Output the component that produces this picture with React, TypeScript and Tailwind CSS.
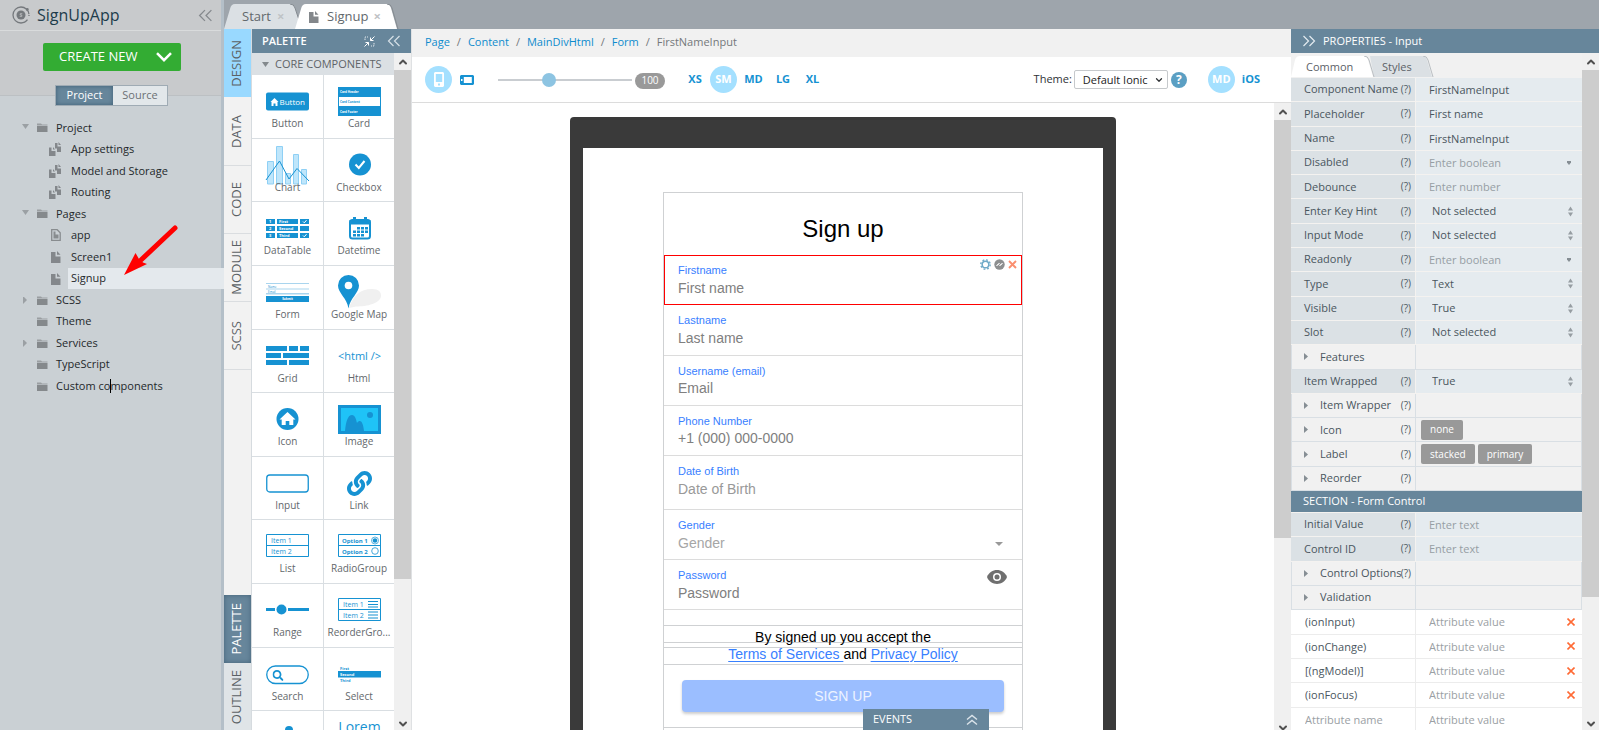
import React from 'react';
import { ChevronDown, ChevronUp } from 'lucide-react';
import { FaLink, FaSearch } from 'react-icons/fa';

const BLUE = '#1692d2';

/* ---------- shared pieces ---------- */

function ScrollBar({ thumb, end = 'h-[12px]' }: { thumb: string; end?: string }) {
  return (
    <div className="flex w-[17px] shrink-0 flex-col overflow-hidden bg-[#f0f0f0]" aria-hidden="true">
      <div className="flex h-[17px] shrink-0 items-center justify-center text-[#505050]">
        <ChevronUp size={12} strokeWidth={4} />
      </div>
      <div className={`min-h-0 bg-[#cdcdcd] ${thumb}`} />
      <div className="min-h-[17px] flex-1" />
      <div className={`flex shrink-0 items-center justify-center text-[#505050] ${end}`}>
        <ChevronDown size={12} strokeWidth={4} className="shrink-0" />
      </div>
    </div>
  );
}

function DoubleChevron({ right = false, size = 14 }: { right?: boolean; size?: number }) {
  return (
    <svg width={size} height={size} viewBox="0 0 14 14" fill="none" stroke="currentColor" strokeWidth="1.2">
      {right ? <path d="M1.5 2 6.5 7l-5 5M7.5 2l5 5-5 5" /> : <path d="M6.5 2l-5 5 5 5M12.5 2l-5 5 5 5" />}
    </svg>
  );
}

function PageIcon({ outlined = false }: { outlined?: boolean }) {
  return outlined ? (
    <svg width="10" height="12" viewBox="0 0 10 12">
      <path d="M.7.7h5.5l3 3v7.6H.7z" fill="none" stroke="#888c8f" strokeWidth="1.3" />
      <path d="M2.5 2.5h2v3h3V9.500h-5z" fill="#888c8f" />
    </svg>
  ) : (
    <svg width="10" height="12" viewBox="0 0 10 12">
      <path d="M0 1h4.500v4.500H9.500V12H0z" fill="#83878b" />
      <path d="M6 0l3.500 3.800H6z" fill="#83878b" />
    </svg>
  );
}

function PagesIcon() {
  return (
    <svg width="13" height="14" viewBox="0 0 13 14" fill="#83878b">
      <path d="M0 5.500h2.500v3.500h4V14H0z" />
      <path d="M4 5l2 2.500H4zM6 1h2.500v3.500H12V10H8V6.500H6z" />
      <path d="M9.500 0L12 3H9.500z" />
    </svg>
  );
}

function FolderIcon() {
  return (
    <svg width="11" height="9" viewBox="0 0 11 9">
      <path d="M0 .5h4l1 1h5.500v1H0z" fill="#9a9ea1" />
      <path d="M0 3h10.500v6H0z" fill="#85898c" />
    </svg>
  );
}

/* ---------- project sidebar ---------- */

type Node = {
  name: string;
  kind: 'folder' | 'pages' | 'page' | 'outlined';
  arrow?: 'open' | 'closed';
  selected?: boolean;
};

const tree: Node[] = [
  { name: 'Project', kind: 'folder', arrow: 'open' },
  { name: 'App settings', kind: 'pages' },
  { name: 'Model and Storage', kind: 'pages' },
  { name: 'Routing', kind: 'pages' },
  { name: 'Pages', kind: 'folder', arrow: 'open' },
  { name: 'app', kind: 'outlined' },
  { name: 'Screen1', kind: 'page' },
  { name: 'Signup', kind: 'page', selected: true },
  { name: 'SCSS', kind: 'folder', arrow: 'closed' },
  { name: 'Theme', kind: 'folder' },
  { name: 'Services', kind: 'folder', arrow: 'closed' },
  { name: 'TypeScript', kind: 'folder' },
  { name: 'Custom components', kind: 'folder' },
];

function TreeRow({ node }: { node: Node }) {
  const folder = node.kind === 'folder';
  return (
    <li className="flex items-stretch">
      <span className="flex w-[37px] shrink-0 items-center pl-[22px]">
        {node.arrow && (
          <svg width="7" height="7" viewBox="0 0 7 7" fill="#9ba0a4">
            {node.arrow === 'open' ? <path d="M0 0h7L3.500 5z" /> : <path d="M1 -1l4 4-4 4z" />}
          </svg>
        )}
      </span>
      <span className={`flex shrink-0 items-center ${folder ? 'w-[16px]' : 'w-[31px] justify-start pl-[12px]'}`}>
        {folder && <FolderIcon />}
        {node.kind === 'pages' && <PagesIcon />}
        {node.kind === 'page' && <span className="pl-[2px]"><PageIcon /></span>}
        {node.kind === 'outlined' && <span className="pl-[2px]"><PageIcon outlined /></span>}
      </span>
      <span className={`flex flex-1 items-center pl-[3px] ${node.selected ? 'bg-[#e4e9ed]' : ''}`}>{node.name}</span>
    </li>
  );
}

function Sidebar() {
  return (
    <aside className="relative flex w-[224px] shrink-0 flex-col bg-[#cad0d4]">
      <div className="bg-[#c8cacc]">
        <div className="flex h-[31px] items-center border-b border-[#d9dbdc] pl-[12px] pr-[11px]">
          <svg width="18" height="18" viewBox="0 0 18 18" fill="none">
            <circle cx="9" cy="9" r="8" stroke="#75797d" strokeWidth="1.300" strokeDasharray="44 4" strokeDashoffset="-5" />
            <circle cx="9" cy="9" r="4.500" fill="#75797d" />
            <circle cx="15.300" cy="3.500" r="1.400" fill="#75797d" />
            <path d="M10.300 7.700H8.200v1.300h1.600v1.400H7.700" stroke="#c8cacc" strokeWidth=".7" />
          </svg>
          <h1 className="ml-[7px] flex-1 text-[16px] leading-5 text-[#1d3c4b]">SignUpApp</h1>
          <button aria-label="Collapse sidebar" className="text-[#85898d]"><DoubleChevron size={15} /></button>
        </div>
        <div className="flex h-[65px] items-start border-b border-[#bcc0c3] pl-[43px] pt-[12px]">
          <button className="flex h-[28px] w-[138px] items-center rounded-[2px] bg-[#33ac33] pl-4 text-[13px] text-white">
            <span className="flex-1 text-left">CREATE NEW</span>
            <svg width="16" height="10" viewBox="0 0 16 10" className="mr-[9px]" fill="none" stroke="#fff" strokeWidth="2.500"><path d="M1 1.200l7 7 7-7" /></svg>
          </button>
        </div>
      </div>
      <div className="-mt-[11px] ml-[55px] flex h-[21px] w-[113px] border border-[#9fabb4] text-[11px]">
        <button className="w-[57px] bg-[#67869b] text-white shadow-[inset_0_0_4px_#3f5f75]">Project</button>
        <button className="flex-1 bg-[#e2e7ea] text-[#6c7175]">Source</button>
      </div>
      <div className="absolute inset-y-0 right-0 w-[3px] bg-[#b4bfc8]" />
      <ul className="relative mt-[11px] grid h-[280px] auto-rows-fr text-[11px] text-[#24282b]">
        {tree.map((n) => <TreeRow key={n.name} node={n} />)}
      </ul>
      <svg className="absolute left-[123px] top-[224px]" width="56" height="54" viewBox="0 0 56 54">
        <path d="M52 4L18 36" stroke="#f00" strokeWidth="5" strokeLinecap="round" />
        <path d="M1 51L12.500 29l3.500 6 4 3.500L24 40z" fill="#f00" />
      </svg>
      <i className="absolute left-[110px] top-[379px] h-[14px] w-px bg-black" />
    </aside>
  );
}

/* ---------- document tabs ---------- */

function TopTabs() {
  return (
    <div className="flex h-[29px] shrink-0 items-end bg-[#9ea5ac]">
      <button className="relative flex h-[25px] w-[76px] items-center">
        <svg className="absolute inset-0" width="76" height="25" viewBox="0 0 76 25">
          <path d="M0 25L6 5Q7 0 11 0H65Q70 0 71 4L76 19V25z" fill="#dbe0e4" />
          <path d="M66 0Q70 0 71 4L76 19" fill="none" stroke="#858b91" />
        </svg>
        <span className="relative pl-[18px] text-[13px] text-[#62686c]">Start</span>
        <span className="relative pl-[6px] text-[13px] font-bold text-[#bfc3c6]">×</span>
      </button>
      <button className="relative -ml-[5px] flex h-[25px] w-[104px] items-center">
        <svg className="absolute inset-0" width="104" height="25" viewBox="0 0 104 25">
          <path d="M0 25L6 5Q7 0 11 0H91Q95 0 96 4L102 25z" fill="#fff" />
          <path d="M92 0Q96 0 97 4L103 25" fill="none" stroke="#858b91" />
        </svg>
        <span className="relative pl-[14px]"><PageIcon /></span>
        <span className="relative pl-[8px] text-[13px] text-[#62686c]">Signup</span>
        <span className="relative pl-[5px] text-[13px] font-bold text-[#bfc3c6]">×</span>
      </button>
    </div>
  );
}

/* ---------- vertical tabs ---------- */

function VTab({ name, look }: { name: string; look: string }) {
  return (
    <button className={`flex h-[68px] shrink-0 items-center justify-center pr-1 ${look}`}>
      <span className="rotate-180 text-[13px] leading-[20px] [writing-mode:vertical-rl]">{name}</span>
    </button>
  );
}

function VerticalTabs() {
  return (
    <nav className="flex w-[28px] shrink-0 flex-col border-r border-[#d6dbdf] bg-[#f2f2f2] text-[#5b6165]">
      <VTab name="DESIGN" look="bg-[#99d9ff]" />
      <VTab name="DATA" look="mt-px border-b border-[#dadde0]" />
      <VTab name="CODE" look="border-b border-[#dadde0]" />
      <VTab name="MODULE" look="border-b border-[#dadde0]" />
      <VTab name="SCSS" look="border-b border-[#dadde0]" />
      <div className="flex-1" />
      <VTab name="PALETTE" look="bg-[#67869b] text-white shadow-[inset_0_0_5px_#45647a]" />
      <VTab name="OUTLINE" look="-mb-px bg-[#dfe4e7]" />
    </nav>
  );
}

/* ---------- component palette ---------- */

const tiny = 'text-[4px] font-bold';

function RowsArt({ a, b, bold }: { a: string; b: string; bold?: boolean }) {
  return (
    <>
      <path d="M.5 10.500h42v22h-42zM0 21.500h43" fill="none" stroke={BLUE} />
      <text x={bold ? 4 : 5} y="19" fill={BLUE} className={bold ? 'text-[6px] font-bold' : 'text-[7px]'}>{a}</text>
      <text x={bold ? 4 : 5} y="29.500" fill={BLUE} className={bold ? 'text-[6px] font-bold' : 'text-[7px]'}>{b}</text>
    </>
  );
}

const art: Record<string, React.ReactNode> = {
  Button: (
    <>
      <rect y="13.500" width="43" height="18" rx="2" fill={BLUE} />
      <path d="M4.500 23L8.500 19l4 4h-1v4H9.500v-2.500h-2V27H5.500v-4z" fill="#fff" />
      <text x="13.500" y="26" fill="#fff" className="text-[8px]">Button</text>
    </>
  ),
  Card: (
    <>
      <rect y="8" width="43" height="29" fill={BLUE} />
      <rect x="1" y="18" width="41" height="9" fill="#fff" />
      <text x="2" y="14" fill="#fff" className="text-[3px] font-bold">Card Header</text>
      <text x="2" y="24" fill={BLUE} className="text-[3px] font-bold">Card Content</text>
      <text x="2" y="33.500" fill="#fff" className="text-[3px] font-bold">Card Footer</text>
    </>
  ),
  Chart: (
    <>
      <g fill="#bfe6fb" stroke="#8fd0f5">
        <path d="M1.500 18.500h6V41h-6zM10.500 3.500h6V41h-6zM19.500 30.500h5V41h-5zM27.500 11.500h5V41h-5zM35.500 26.500h5V41h-5z" />
      </g>
      <path d="M0 37L13.500 18 23 36l8-10.500L43 38" fill="none" stroke={BLUE} />
    </>
  ),
  Checkbox: (
    <>
      <circle cx="22" cy="21.500" r="11" fill={BLUE} />
      <path d="M17.500 21.500l3.300 3.500 5.700-7" fill="none" stroke="#fff" strokeWidth="2" />
    </>
  ),
  DataTable: (
    <>
      <path d="M0 13h9v5H0zM11 13h21v5H11zM34 13h9v5h-9zM0 20h9v5H0zM11 20h21v5H11zM34 20h9v5h-9zM0 27h9v5H0zM11 27h21v5H11zM34 27h9v5h-9z" fill={BLUE} />
      <g fill="#fff" className={tiny}>
        <text x="3" y="17">1</text><text x="13" y="17">First</text>
        <text x="3" y="24">2</text><text x="13" y="24">Second</text>
        <text x="3" y="31">3</text><text x="13" y="31">Third</text>
      </g>
      <path d="M37 15.500l1.300 1.300 2.200-2.600M37 29.500l1.300 1.300 2.200-2.600" fill="none" stroke="#fff" />
    </>
  ),
  Datetime: (
    <>
      <rect x="12" y="14" width="20" height="18.500" rx="2.500" fill="none" stroke={BLUE} strokeWidth="2" />
      <path d="M11.500 14h21v4.500h-21zM15 11h3v4h-3zM26 11h3v4h-3z" fill={BLUE} />
      <path d="M19 21h3v2.500h-3zM23 21h3v2.500h-3zM27 21h3v2.500h-3zM15 24.500h3V27h-3zM19 24.500h3V27h-3zM23 24.500h3V27h-3zM27 24.500h3V27h-3zM15 28h3v2.500h-3zM19 28h3v2.500h-3zM23 28h3v2.500h-3z" fill={BLUE} />
    </>
  ),
  Form: (
    <>
      <path d="M0 13h43v1H0zM0 18.500h43v1H0zM0 23h43v1.500H0z" fill="#a9d5ee" />
      <rect y="26" width="43" height="6" fill={BLUE} />
      <text x="2" y="17.500" fill={BLUE} className="text-[3px]">Name</text>
      <text x="2" y="22.500" fill={BLUE} className="text-[3px]">Email</text>
      <text x="21.500" y="30" fill="#fff" textAnchor="middle" className="text-[3px] font-bold">Submit</text>
    </>
  ),
  'Google Map': (
    <>
      <path d="M11 38C15 26 22 19 34 19c7 0 9 3 9 6.500 0 8-14 11-25 11z" fill="#f0f0f0" />
      <path d="M10.500 38.500C9 28 0 23 0 15.500a10.500 10.500 0 0121 0C21 23 12 28 10.500 38.500z" fill={BLUE} />
      <circle cx="10.500" cy="15.500" r="3.800" fill="#fff" />
    </>
  ),
  Grid: <path d="M0 12h21v5H0zM23 12h9v5h-9zM34 12h9v5h-9zM0 19h15v5H0zM17 19h26v5H17zM0 26h21v5H0zM23 26h20v5H23z" fill={BLUE} />,
  Html: <text x="21.500" y="26" fill={BLUE} textAnchor="middle" className="text-[11px]">{'<html />'}</text>,
  Icon: (
    <>
      <circle cx="21.500" cy="22" r="11" fill={BLUE} />
      <path d="M13.500 22.500l8-7.500 8 7.500h-2.200V28h-4v-4h-3.600v4h-4v-5.500z" fill="#fff" />
    </>
  ),
  Image: (
    <>
      <rect y="8" width="43" height="29" fill={BLUE} />
      <rect x="3" y="11" width="37" height="23" fill="#1fc3f7" />
      <path d="M7 34C8 24 10 18 14 18c3 0 4 4 5 8 3-4 6-2 7 8z" fill={BLUE} />
      <circle cx="32" cy="18" r="3" fill={BLUE} />
    </>
  ),
  Input: <rect x=".75" y="14" width="41.500" height="17" rx="3" fill="none" stroke={BLUE} strokeWidth="1.300" />,
  Link: <FaLink x="9" y="10" size={25} color={BLUE} />,
  List: <RowsArt a="Item 1" b="Item 2" />,
  RadioGroup: (
    <>
      <RowsArt a="Option 1" b="Option 2" bold />
      <circle cx="37" cy="16.500" r="3.500" fill="#fff" stroke={BLUE} strokeWidth=".7" />
      <circle cx="37" cy="16.500" r="2.300" fill={BLUE} />
      <circle cx="37" cy="27" r="3.300" fill="#fff" stroke={BLUE} strokeWidth=".8" />
    </>
  ),
  Range: (
    <>
      <path d="M0 20h9v3H0zM22 20h21v3H22z" fill={BLUE} />
      <circle cx="15.500" cy="21.500" r="5" fill={BLUE} />
    </>
  ),
  'ReorderGro...': (
    <>
      <RowsArt a="Item 1" b="Item 2" />
      <path d="M30 13.500h10M30 16.500h10M30 19h10M30 24h10M30 27h10M30 30h10" stroke={BLUE} strokeWidth="1.200" />
    </>
  ),
  Search: (
    <>
      <rect x=".75" y="14" width="41.500" height="17.500" rx="8.700" fill="none" stroke={BLUE} strokeWidth="1.300" />
      <FaSearch x="6.500" y="18" size={11} color={BLUE} />
    </>
  ),
  Select: (
    <>
      <rect y="19" width="43" height="6.500" fill={BLUE} />
      <text x="2" y="17.500" fill={BLUE} className={tiny}>First</text>
      <text x="2" y="23.500" fill="#fff" className={tiny}>Second</text>
      <text x="2" y="29.500" fill={BLUE} className={tiny}>Third</text>
    </>
  ),
};

const clippedArt = [
  <g key="dots" fill={BLUE}><circle cx="23" cy="15" r="4" /><circle cx="15.500" cy="18" r="3" /></g>,
  <text key="lorem" x="21.500" y="17" fill={BLUE} textAnchor="middle" className="text-[14px]">Lorem</text>,
];

function Cell({ left, name, children }: { left: boolean; name?: string; children: React.ReactNode }) {
  return (
    <button className={`flex flex-col items-center border-b border-[#d9dee2] pt-1 ${left ? 'border-r' : ''}`}>
      <svg width="43" height="36" viewBox="0 0 43 36" className="shrink-0 overflow-visible">{children}</svg>
      {name && <span className="relative text-[10px] leading-4 text-[#63686c]">{name}</span>}
    </button>
  );
}

function Palette() {
  return (
    <section className="flex w-[160px] shrink-0 flex-col border-r border-[#dfe1e3]">
      <header className="flex h-6 shrink-0 items-center bg-[#67869b] pl-[10px] pr-[10px] text-[11px] text-white">
        <h2 className="flex-1 font-semibold">PALETTE</h2>
        <button aria-label="Shrink" className="mr-[12px]">
          <svg width="11" height="11" viewBox="0 0 11 11" fill="none" stroke="#fff">
            <path d="M10.500 .5L6.500 4.500M6.500 1.500v3h3M.5 10.500l4-4M1.500 6.500h3v3" />
            <path d="M1 4V1h3M10 7v3H7" strokeDasharray="1.500 1" opacity=".8" />
          </svg>
        </button>
        <button aria-label="Collapse palette" className="text-[#d5dfe6]"><DoubleChevron /></button>
      </header>
      <div className="flex min-h-0 flex-1">
        <div className="min-w-0 flex-1 overflow-hidden">
          <h3 className="flex h-[22px] items-center bg-[#dbe0e4] pl-[10px] text-[11px] text-[#5f6468]">
            <svg width="7" height="5" viewBox="0 0 7 5" className="mr-[6px]"><path d="M0 0h7L3.500 5z" fill="#83898d" /></svg>
            CORE COMPONENTS
          </h3>
          <div className="grid h-[700px] auto-rows-fr grid-cols-[72px_1fr] bg-white">
            {Object.keys(art).map((name, i) => <Cell key={name} name={name} left={i % 2 === 0}>{art[name]}</Cell>)}
            {clippedArt.map((drawing, i) => <Cell key={i} left={i === 0}>{drawing}</Cell>)}
          </div>
        </div>
        <ScrollBar thumb="h-[509px]" />
      </div>
    </section>
  );
}

/* ---------- device preview ---------- */

const round = 'flex h-[27px] w-[27px] items-center justify-center rounded-full bg-[#a4e0ff] text-white';

function Toolbar() {
  return (
    <div className="flex h-[46px] shrink-0 items-center border-b border-[#dcdcdc] bg-white pl-[13px] pr-[31px] text-[11px]">
      <button aria-label="Portrait" className={round}>
        <svg width="10" height="15" viewBox="0 0 10 15"><path fillRule="evenodd" d="M1 0h8l1 1v13l-1 1H1l-1-1V1zm.8 2v8h6.400V2zM4 11.500v2h2v-2z" fill="#fff" /></svg>
      </button>
      <button aria-label="Landscape" className="ml-2">
        <svg width="14" height="10" viewBox="0 0 14 10"><path fillRule="evenodd" d="M1 0h12l1 1v8l-1 1H1L0 9V1zm2.800 2v6h8V2zM1 4v2h1.500V4z" fill={BLUE} /></svg>
      </button>
      <input
        type="range"
        aria-label="Zoom"
        defaultValue={37}
        className="ml-6 h-[14px] w-[134px] appearance-none bg-transparent [&::-webkit-slider-runnable-track]:h-[2px] [&::-webkit-slider-runnable-track]:bg-[#c9cdd1] [&::-webkit-slider-thumb]:-mt-[6px] [&::-webkit-slider-thumb]:h-[14px] [&::-webkit-slider-thumb]:w-[14px] [&::-webkit-slider-thumb]:appearance-none [&::-webkit-slider-thumb]:rounded-full [&::-webkit-slider-thumb]:bg-[#8dc4e2]"
      />
      <span className="ml-[3px] mt-[2px] flex h-4 w-[30px] items-center justify-center rounded-full bg-[#999] text-[10px] text-white">100</span>
      <div className="ml-[15px] flex items-center font-bold text-[#1692d2]">
        <button className="w-[30px]">XS</button>
        <button className={round}>SM</button>
        <button className="w-[33px]">MD</button>
        <button className="w-[26px]">LG</button>
        <button className="w-[33px]">XL</button>
      </div>
      <label className="ml-auto flex items-center text-[#303336]">
        Theme:
        <span className="relative ml-[2px] flex items-center">
          <select className="h-[19px] w-[94px] appearance-none rounded-[2px] border border-[#c6c9cc] bg-white pl-2 text-[11px] leading-[16px] text-[#222]">
            <option>Default Ionic</option>
          </select>
          <ChevronDown size={10} strokeWidth={3} className="pointer-events-none absolute right-[4px] top-[5px]" />
        </span>
      </label>
      <button className="ml-[3px] flex h-4 w-4 items-center justify-center rounded-full bg-[#5b9fc3] text-[12px] font-bold text-white">?</button>
      <button className={`ml-[21px] font-bold ${round}`}>MD</button>
      <button className="ml-[7px] font-bold text-[#1692d2]">iOS</button>
    </div>
  );
}

function Field({
  id, label, placeholder, tone = 'placeholder:text-[#808080]', look = 'border-b border-[#dcdcdc]', children,
}: {
  id: string; label: string; placeholder: string; tone?: string; look?: string; children?: React.ReactNode;
}) {
  return (
    <div className={`relative flex flex-col pl-[14px] pr-[14px] pt-[9px] ${look}`}>
      <label htmlFor={id} className="text-[11px] leading-3 text-[#3880ff]">{label}</label>
      <input id={id} placeholder={placeholder} className={`mt-[3px] h-[18px] w-full bg-transparent text-[14px] outline-none ${tone}`} />
      {children}
    </div>
  );
}

function Device() {
  return (
    <div className="mt-[14px] w-[546px] shrink-0 rounded-t-[4px] bg-[#3a3a3a] px-[13px] pt-[31px] [font-family:'Liberation_Sans',Arial,sans-serif]">
      <div className="flex h-[640px] flex-col items-center bg-white pt-[44px]">
        <div className="flex w-[360px] flex-1 flex-col border border-[#cfd1d3]">
          <h2 className="pb-[12px] pt-[22px] text-center text-[24px] leading-[28px] text-black">Sign up</h2>
          <div className="grid h-[201px] grid-rows-4">
            <Field id="firstname" label="Firstname" placeholder="First name" look="border border-[#f00] !pl-[13px] !pt-[8px]">
              <span className="absolute right-[4px] top-[3px] flex items-center gap-[3px]">
                <svg width="11" height="11" viewBox="0 0 11 11" fill="none" stroke="#6faac8">
                  <circle cx="5.500" cy="5.500" r="3.300" strokeWidth="1.500" />
                  <circle cx="5.500" cy="5.500" r="4.700" strokeWidth="1.400" strokeDasharray="1.850 1.840" />
                </svg>
                <svg width="11" height="11" viewBox="0 0 11 11">
                  <circle cx="5.500" cy="5.500" r="5.200" fill="#8d8f90" />
                  <path d="M2.500 6.500l2-2h1l-2 2zM5.500 6.500l2-2h1l-2 2z" fill="none" stroke="#fff" strokeWidth=".8" />
                </svg>
                <svg width="9" height="9" viewBox="0 0 9 9"><path d="M1 1l7 7M8 1L1 8" stroke="#fa8f6f" strokeWidth="1.900" /></svg>
              </span>
            </Field>
            <Field id="lastname" label="Lastname" placeholder="Last name" />
            <Field id="username" label="Username (email)" placeholder="Email" />
            <Field id="phone" label="Phone Number" placeholder="+1 (000) 000-0000" />
          </div>
          <div className="grid h-[154px] grid-rows-[54px_50px_50px]">
            <Field id="birth" label="Date of Birth" placeholder="Date of Birth" tone="placeholder:text-[#999]" />
            <Field id="gender" label="Gender" placeholder="Gender" tone="placeholder:text-[#a6a6a6]">
              <svg className="absolute right-[19px] top-[32px]" width="8" height="4" viewBox="0 0 8 4"><path d="M0 0h8L4 4z" fill="#999" /></svg>
            </Field>
            <Field id="password" label="Password" placeholder="Password">
              <svg className="absolute right-[15px] top-[10px]" width="20" height="14" viewBox="0 0 20 14">
                <path d="M0 7C3.500-2.300 16.500-2.300 20 7 16.500 16.300 3.500 16.300 0 7z" fill="#6f6f6f" />
                <circle cx="10" cy="7" r="4" fill="#fff" />
                <circle cx="10" cy="7" r="2.500" fill="#6f6f6f" />
              </svg>
            </Field>
          </div>
          <div className="relative mt-[15px] h-10 border-y border-[#cfd1d3] pt-[3px] text-center text-[14px] leading-[17px] text-black">
            <i className="absolute inset-x-0 top-[16px] h-[6px] border-y border-[#cfd1d3]" />
            <p className="relative">
              By signed up you accept the<br />
              <a href="#terms" className="text-[#3880ff] underline underline-offset-2">Terms of Services </a>
              and <a href="#privacy" className="text-[#3880ff] underline underline-offset-2">Privacy Policy</a>
            </p>
          </div>
          <div className="h-[63px] border-b border-[#cfd1d3] px-[18px] pt-[15px]">
            <button className="h-8 w-full rounded-[4px] bg-[#9bbeff] text-[14px] text-[#edf3ff] shadow-[0_2px_3px_rgba(0,0,0,0.2)]">SIGN UP</button>
          </div>
        </div>
      </div>
    </div>
  );
}

function Workspace() {
  const crumbs = ['Page', 'Content', 'MainDivHtml', 'Form'];
  return (
    <main className="relative flex min-w-0 flex-1 flex-col bg-white">
      <nav className="flex h-[28px] shrink-0 items-center bg-[#f1f1f1] pb-[2px] pl-[13px] text-[11px] text-[#74787b]">
        {crumbs.map((c) => (
          <React.Fragment key={c}>
            <a href={`#${c}`} className="text-[#0d8bcd]">{c}</a>
            <span className="w-[18px] text-center">/</span>
          </React.Fragment>
        ))}
        <span>FirstNameInput</span>
      </nav>
      <Toolbar />
      <div className="flex min-h-0 flex-1">
        <div className="flex min-w-0 flex-1 justify-center overflow-hidden"><Device /></div>
        <ScrollBar thumb="h-[418px]" end="h-[5px]" />
      </div>
      <button className="absolute bottom-0 left-[451px] flex h-[21px] w-[126px] items-center justify-between bg-[#67869b] pl-[10px] pr-[11px] text-[11px] text-white">
        EVENTS
        <svg width="12" height="12" viewBox="0 0 12 12" fill="none" stroke="#dbe4ea" strokeWidth="1.400"><path d="M1 5.500l5-4 5 4M1 10.500l5-4 5 4" /></svg>
      </button>
    </main>
  );
}

/* ---------- properties ---------- */

type Prop = {
  name: string;
  help?: boolean;
  value?: string;
  hint?: string;
  options?: string;
  combo?: boolean;
  group?: boolean;
  badges?: string[];
};

const common: Prop[] = [
  { name: 'Component Name', help: true, value: 'FirstNameInput' },
  { name: 'Placeholder', help: true, value: 'First name' },
  { name: 'Name', help: true, value: 'FirstNameInput' },
  { name: 'Disabled', help: true, hint: 'Enter boolean', combo: true },
  { name: 'Debounce', help: true, hint: 'Enter number' },
  { name: 'Enter Key Hint', help: true, options: 'Not selected' },
  { name: 'Input Mode', help: true, options: 'Not selected' },
  { name: 'Readonly', help: true, hint: 'Enter boolean', combo: true },
  { name: 'Type', help: true, options: 'Text' },
  { name: 'Visible', help: true, options: 'True' },
  { name: 'Slot', help: true, options: 'Not selected' },
  { name: 'Features', group: true },
  { name: 'Item Wrapped', help: true, options: 'True' },
  { name: 'Item Wrapper', help: true, group: true },
  { name: 'Icon', help: true, group: true, badges: ['none'] },
  { name: 'Label', help: true, group: true, badges: ['stacked', 'primary'] },
  { name: 'Reorder', help: true, group: true },
];

const control: Prop[] = [
  { name: 'Initial Value', help: true, hint: 'Enter text' },
  { name: 'Control ID', help: true, hint: 'Enter text' },
  { name: 'Control Options', help: true, group: true },
  { name: 'Validation', group: true },
];

const attributes = ['(ionInput)', '(ionChange)', '[(ngModel)]', '(ionFocus)', ''];

function Help() {
  return <button className="absolute right-[4px] top-0 h-full text-[10px] text-[#4c5962]">(?)</button>;
}

function PropRow({ p }: { p: Prop }) {
  const id = `prop-${p.name}`;
  if (p.group) {
    return (
      <div className="grid grid-cols-[124px_1fr] border-b border-x border-[#d9dfe4] bg-[#f1f1f1]">
        <div className="relative flex items-center border-r border-[#d9dfe4] pl-[12px]">
          <svg width="4" height="7" viewBox="0 0 4 7" className="mr-[12px]"><path d="M0 0l4 3.500L0 7z" fill="#868e94" /></svg>
          <span className="whitespace-nowrap">{p.name}</span>
          {p.help && <Help />}
        </div>
        <div className="flex items-center gap-[3px] pl-[5px]">
          {p.badges?.map((b) => (
            <button key={b} className="h-5 rounded-[2px] bg-[#999] px-[9px] text-[10px] text-white">{b}</button>
          ))}
        </div>
      </div>
    );
  }
  return (
    <div className="grid grid-cols-[125px_1fr] border-b border-[#f4f2f0]">
      <div className="relative flex items-center border-r border-[#f4f2f0] bg-[#dbe1e5] pl-[13px]">
        <label htmlFor={id} className="whitespace-nowrap">{p.name}</label>
        {p.help && <Help />}
      </div>
      <div className="relative flex items-center bg-[#e5ebef]">
        {p.options ? (
          <>
            <select id={id} className="h-full w-full appearance-none bg-transparent pl-[16px] outline-none"><option>{p.options}</option></select>
            <svg className="pointer-events-none absolute right-[9px]" width="5" height="11" viewBox="0 0 5 11" fill="#969da2"><path d="M0 4.500L2.500 .5 5 4.500zM0 6.500h5l-2.500 4z" /></svg>
          </>
        ) : (
          <input id={id} defaultValue={p.value} placeholder={p.hint} className="h-full w-full bg-transparent pl-[13px] outline-none placeholder:text-[#969ea4]" />
        )}
        {p.combo && <svg className="absolute right-[11px]" width="4" height="4" viewBox="0 0 4 4" fill="#868e94"><path d="M0 0h4v1.500L2 4 0 1.500z" /></svg>}
      </div>
    </div>
  );
}

function AttrRow({ name }: { name: string }) {
  return (
    <div className="grid grid-cols-[125px_1fr] border-b border-[#ececec] bg-white">
      <div className="border-r border-[#ececec]">
        <input aria-label="Attribute name" defaultValue={name} placeholder="Attribute name" className="h-full w-full bg-transparent pl-[14px] outline-none placeholder:text-[#9aa0a4]" />
      </div>
      <div className="relative flex items-center">
        <input aria-label="Attribute value" placeholder="Attribute value" className="h-full w-full bg-transparent pl-[13px] outline-none placeholder:text-[#9aa0a4]" />
        {name && (
          <button aria-label="Remove" className="absolute right-[7px]">
            <svg width="8" height="8" viewBox="0 0 8 8"><path d="M.5 .5l7 7M7.500 .5l-7 7" stroke="#ff6a35" strokeWidth="1.600" /></svg>
          </button>
        )}
      </div>
    </div>
  );
}

function Properties() {
  return (
    <aside className="flex w-[308px] shrink-0 flex-col bg-[#f1f1f1] text-[11px] text-[#4a565e]">
      <header className="flex h-6 shrink-0 items-center bg-[#67869b] pl-[11px] text-white">
        <button aria-label="Collapse properties" className="text-[#e4ebf0]"><DoubleChevron right /></button>
        <h2 className="ml-[7px] font-medium">PROPERTIES - Input</h2>
      </header>
      <div className="flex min-h-0 flex-1">
        <div className="flex min-w-0 flex-1 flex-col overflow-hidden">
          <div className="flex h-[25px] shrink-0 items-end pb-px text-[#5c6267]">
            <button className="relative z-10 h-[21px] w-[83px]">
              <svg className="absolute inset-0" width="84" height="21" viewBox="0 0 84 21">
                <path d="M0 21L4 4Q5 0 9 0H72Q76 0 77 4L82 21z" fill="#fff" />
                <path d="M73 0Q77 0 78 4L83 21" fill="none" stroke="#b9bec2" />
              </svg>
              <span className="absolute left-[15px] top-[3px] text-[11px] leading-4">Common</span>
            </button>
            <button className="relative -ml-[6px] h-[21px] w-[66px]">
              <svg className="absolute inset-0" width="66" height="21" viewBox="0 0 66 21">
                <path d="M2 0H54Q58 0 59 4L64 21H6z" fill="#dbe0e4" />
                <path d="M55 0Q59 0 60 4L65 21" fill="none" stroke="#b9bec2" />
              </svg>
              <span className="absolute left-[14px] top-[3px] text-[11px] leading-4">Styles</span>
            </button>
          </div>
          <div className="grid h-[413px] shrink-0 auto-rows-fr">
            {common.map((p) => <PropRow key={p.name} p={p} />)}
          </div>
          <h3 className="flex h-[22px] shrink-0 items-center border-b border-[#f4f2f0] bg-[#67869b] pl-[12px] font-medium text-white">SECTION - Form Control</h3>
          <div className="grid h-[219px] shrink-0 auto-rows-fr">
            {control.map((p) => <PropRow key={p.name} p={p} />)}
            {attributes.map((a) => <AttrRow key={a || 'new'} name={a} />)}
          </div>
        </div>
        <ScrollBar thumb="h-[527px]" />
      </div>
    </aside>
  );
}

export default function App() {
  return (
    <div className="flex h-screen overflow-hidden bg-white [font-family:'Open_Sans',sans-serif]">
      <Sidebar />
      <div className="flex min-w-0 flex-1 flex-col">
        <TopTabs />
        <div className="flex min-h-0 flex-1">
          <VerticalTabs />
          <Palette />
          <Workspace />
          <Properties />
        </div>
      </div>
    </div>
  );
}
